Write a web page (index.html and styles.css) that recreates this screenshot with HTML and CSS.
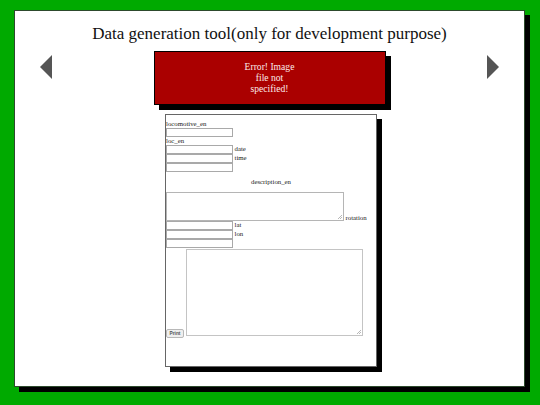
FILE: index.html
```html
<!DOCTYPE html>
<html>
<head>
<meta charset="utf-8">
<title>Data generation tool</title>
<link rel="stylesheet" href="styles.css">
</head>
<body>
<div class="panel">
  <h1 class="title">Data generation tool(only for development purpose)</h1>
  <div class="viewer">
    <span class="arrow arrow-left"></span>
    <div class="error-box"><div class="error-text">Error! Image file not specified!</div></div>
    <span class="arrow arrow-right"></span>
  </div>
  <form class="data-form">
    <div class="lbl">locomotive_en</div>
    <div class="row"><input class="field" type="text"></div>
    <div class="lbl">loc_en</div>
    <div class="row"><input class="field" type="text"><span class="side">date</span></div>
    <div class="row"><input class="field" type="text"><span class="side">time</span></div>
    <div class="row"><input class="field" type="text"></div>
    <div class="center-lbl">description_en</div>
    <div class="desc-row"><textarea class="desc"></textarea><span class="side">rotation</span></div>
    <div class="row"><input class="field" type="text"><span class="side">lat</span></div>
    <div class="row"><input class="field" type="text"><span class="side">lon</span></div>
    <div class="row"><input class="field" type="text"></div>
    <div class="out-row"><button class="print" type="button">Print</button><textarea class="output"></textarea></div>
  </form>
</div>
</body>
</html>
```
FILE: styles.css
```css
html, body {
  margin: 0;
  padding: 0;
}
body {
  background: #00aa00;
  font-family: "Liberation Serif", "Times New Roman", serif;
  color: #000;
  padding-top: 10px;
  height: 405px;
  box-sizing: border-box;
  overflow: hidden;
  -webkit-font-smoothing: antialiased;
}
.panel {
  box-sizing: border-box;
  margin-left: 14px;
  width: 511px;
  height: 377px;
  background: #fff;
  border: 1px solid #2d4a2d;
  box-shadow: 5px 5px 0 #000;
  display: flex;
  flex-direction: column;
  align-items: center;
}
.title {
  margin: 13px 0 0;
  font-weight: normal;
  font-size: 17px;
  line-height: 20px;
  height: 20px;
  text-align: center;
  color: #111;
}
.viewer {
  align-self: stretch;
  display: flex;
  justify-content: space-between;
  align-items: flex-start;
  padding: 0 25px 0 25px;
  margin-top: 7px;
}
.arrow {
  width: 0;
  height: 0;
  margin-top: 4px;
  border-top: 12.5px solid transparent;
  border-bottom: 12.5px solid transparent;
}
.arrow-left {
  border-right: 12px solid #555;
}
.arrow-right {
  border-left: 12px solid #555;
}
.error-box {
  box-sizing: border-box;
  width: 232px;
  height: 54px;
  background: #aa0000;
  border: 1px solid #000;
  box-shadow: 5px 5px 0 #000;
  display: flex;
  justify-content: center;
  padding-top: 10px;
}
.error-text {
  width: 56px;
  text-align: center;
  color: #fbeaea;
  font-size: 9.6px;
  line-height: 10.8px;
}
.data-form {
  box-sizing: border-box;
  margin: 9px 0 0 3px;
  width: 212px;
  height: 253px;
  border: 1px solid #666;
  box-shadow: 5px 5px 0 #000;
  padding-top: 5px;
  font-size: 6.8px;
  color: #222;
}
.lbl {
  height: 8px;
  line-height: 8px;
  white-space: nowrap;
}
.row {
  display: flex;
  align-items: flex-start;
  height: 9px;
}
.field {
  box-sizing: border-box;
  width: 67px;
  height: 9px;
  margin: 0;
  padding: 0;
  border: 1px solid #a9a9a9;
  background: #fff;
  font-size: 5px;
}
.side {
  margin-left: 1.5px;
  line-height: 8px;
  white-space: nowrap;
}
.center-lbl {
  height: 20px;
  line-height: 20px;
  text-align: center;
}
.desc-row {
  display: flex;
  align-items: flex-end;
  height: 29px;
}
.desc-row .side {
  line-height: 7px;
  margin-bottom: 0;
}
.desc,
.output {
  box-sizing: border-box;
  margin: 0;
  padding: 0;
  font-size: 5px;
  resize: none;
  background-color: #fff;
  background-image:
    linear-gradient(135deg, transparent 45%, #b8b8b8 45%, #b8b8b8 55%, transparent 55%),
    linear-gradient(135deg, transparent 45%, #b8b8b8 45%, #b8b8b8 55%, transparent 55%);
  background-size: 4px 4px, 2px 2px;
  background-position: right 1px bottom 1px, right 1px bottom 1px;
  background-repeat: no-repeat;
}
.desc {
  width: 178px;
  height: 29px;
  border: 1px solid #b5b5b5;
}
.out-row {
  display: flex;
  align-items: flex-end;
  margin-top: 1px;
}
.print {
  box-sizing: border-box;
  width: 18px;
  height: 9px;
  margin: 0 2px -2px 0;
  padding: 0;
  border: 1px solid #b8b8b8;
  border-radius: 2px;
  background: #efefef;
  color: #555;
  font-family: "Liberation Sans", Arial, sans-serif;
  font-size: 4.8px;
  font-weight: bold;
  line-height: 7px;
}
.output {
  width: 177px;
  height: 87px;
  border: 1px solid #c4c4c4;
}
```
